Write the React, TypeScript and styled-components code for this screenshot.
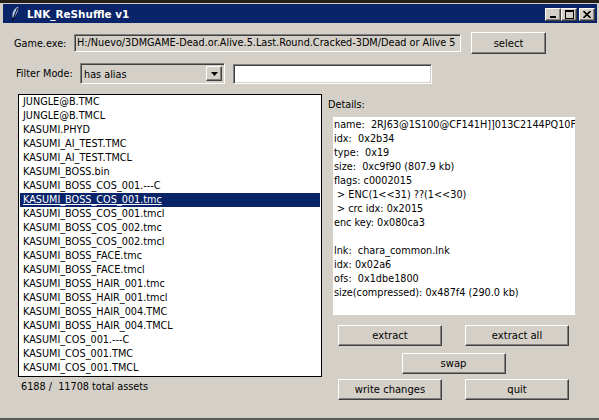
import React from "react";
import styled, { createGlobalStyle, css } from "styled-components";

const GlobalStyle = createGlobalStyle`
  html, body {
    margin: 0;
    padding: 0;
    background: #241e1a;
  }
  body {
    font-family: "DejaVu Sans", "Liberation Sans", sans-serif;
    font-size: 9.7px;
    color: #000;
  }
`;

const raised = css`
  border: 1px solid;
  border-color: #ffffff #404040 #404040 #ffffff;
  box-shadow: inset -1px -1px #808080, inset 1px 1px #d4d0c8;
`;

const sunken = css`
  border: 1px solid;
  border-color: #808080 #ffffff #ffffff #808080;
  box-shadow: inset 1px 1px #404040, inset -1px -1px #d4d0c8;
`;

const Window = styled.div`
  margin-top: 3px;
  height: 417px;
  box-sizing: border-box;
  background: #d4d0c8;
  padding: 1px 2px 0 3px;
  border-bottom: 2px solid #5a5a5a;
  display: flex;
  flex-direction: column;
`;

const TitleBar = styled.div`
  height: 19px;
  background: #0a246a;
  display: flex;
  align-items: center;
  padding-left: 9px;
  padding-right: 2px;
`;

const Title = styled.span`
  margin-left: 8px;
  color: #fff;
  font-weight: bold;
  font-size: 10.4px;
  flex: 1;
`;

const CaptionButton = styled.div<{ $gap?: boolean }>`
  ${raised};
  width: 16px;
  height: 13px;
  box-sizing: border-box;
  background: #d4d0c8;
  margin-top: 1px;
  margin-left: ${(p) => (p.$gap ? "2px" : "0")};
  display: flex;
  align-items: center;
  justify-content: center;
`;

const Client = styled.div`
  flex: 1;
  display: flex;
  flex-direction: column;
`;

const Row = styled.div<{ $top: number; $left: number; $h: number }>`
  display: flex;
  align-items: center;
  margin-top: ${(p) => p.$top}px;
  padding-left: ${(p) => p.$left}px;
  height: ${(p) => p.$h}px;
`;

const Label = styled.span<{ $w: number }>`
  width: ${(p) => p.$w}px;
  white-space: nowrap;
`;

const Field = styled.div<{ $w: number; $h: number; $white?: boolean }>`
  ${sunken};
  box-sizing: border-box;
  width: ${(p) => p.$w}px;
  height: ${(p) => p.$h}px;
  background: ${(p) => (p.$white ? "#fff" : "#d4d0c8")};
  padding: 0 2px 0 2px;
  line-height: ${(p) => p.$h - 2}px;
  white-space: nowrap;
  overflow: hidden;
  margin-left: ${(p) => (p.$white ? "8px" : "0")};
`;

const Combo = styled.div`
  ${sunken};
  box-sizing: border-box;
  width: 145px;
  height: 21px;
  background: #d4d0c8;
  display: flex;
  align-items: stretch;
  padding: 2px;
`;

const ComboText = styled.span`
  flex: 1;
  line-height: 17px;
  padding-left: 1px;
`;

const ComboArrow = styled.div`
  ${raised};
  box-sizing: border-box;
  width: 16px;
  display: flex;
  align-items: center;
  justify-content: center;
`;

const Button = styled.div<{ $w: number }>`
  ${raised};
  box-sizing: border-box;
  width: ${(p) => p.$w}px;
  height: 21px;
  background: #d4d0c8;
  display: flex;
  align-items: center;
  justify-content: center;
  font-size: 10px;
`;

const SelectButton = styled(Button)`
  height: 22px;
  margin-left: 10px;
`;

const Main = styled.div`
  display: flex;
  margin-top: 10px;
  padding-left: 15px;
`;

const LeftColumn = styled.div`
  display: flex;
  flex-direction: column;
`;

const ListBox = styled.div`
  width: 304px;
  height: 283px;
  box-sizing: border-box;
  border: 1px solid #000;
  background: #fff;
  padding: 0 1px;
  overflow: hidden;
`;

const ListItem = styled.div<{ $selected?: boolean }>`
  height: 14px;
  line-height: 14px;
  padding-left: 3px;
  white-space: nowrap;
  background: ${(p) => (p.$selected ? "#0a246a" : "transparent")};
  color: ${(p) => (p.$selected ? "#fff" : "#000")};
  text-decoration: ${(p) => (p.$selected ? "underline" : "none")};
`;

const Status = styled.div`
  height: 20px;
  line-height: 20px;
  padding-left: 3px;
  white-space: pre;
`;

const RightColumn = styled.div`
  flex: 1;
  display: flex;
  flex-direction: column;
`;

const DetailsLabel = styled.div`
  margin-top: 4px;
  padding-left: 6px;
  line-height: 14px;
`;

const DetailsBox = styled.div`
  margin: 5px 0 0 11px;
  width: 242px;
  height: 198px;
  box-sizing: border-box;
  background: #fff;
  padding: 1px 0 0 1px;
  overflow: hidden;
`;

const DetailLine = styled.div`
  height: 14px;
  line-height: 14px;
  white-space: pre;
`;

const Actions = styled.div`
  margin: 10px 0 0 16px;
  width: 231px;
  display: flex;
  flex-direction: column;
  align-items: center;
`;

const ActionRow = styled.div<{ $top: number }>`
  display: flex;
  justify-content: space-between;
  width: 100%;
  margin-top: ${(p) => p.$top}px;
`;

const SwapRow = styled.div`
  margin-top: 7px;
`;

const files = [
  "JUNGLE@B.TMC",
  "JUNGLE@B.TMCL",
  "KASUMI.PHYD",
  "KASUMI_AI_TEST.TMC",
  "KASUMI_AI_TEST.TMCL",
  "KASUMI_BOSS.bin",
  "KASUMI_BOSS_COS_001.---C",
  "KASUMI_BOSS_COS_001.tmc",
  "KASUMI_BOSS_COS_001.tmcl",
  "KASUMI_BOSS_COS_002.tmc",
  "KASUMI_BOSS_COS_002.tmcl",
  "KASUMI_BOSS_FACE.tmc",
  "KASUMI_BOSS_FACE.tmcl",
  "KASUMI_BOSS_HAIR_001.tmc",
  "KASUMI_BOSS_HAIR_001.tmcl",
  "KASUMI_BOSS_HAIR_004.TMC",
  "KASUMI_BOSS_HAIR_004.TMCL",
  "KASUMI_COS_001.---C",
  "KASUMI_COS_001.TMC",
  "KASUMI_COS_001.TMCL",
];

const details = [
  "name:  2RJ63@1S100@CF141H]]013C2144PQ10F",
  "idx:  0x2b34",
  "type:  0x19",
  "size:  0xc9f90 (807.9 kb)",
  "flags: c0002015",
  " > ENC(1<<31) ??(1<<30)",
  " > crc idx: 0x2015",
  "enc key: 0x080ca3",
  "",
  "lnk:  chara_common.lnk",
  "idx: 0x02a6",
  "ofs:  0x1dbe1800",
  "size(compressed): 0x487f4 (290.0 kb)",
];

function Feather() {
  return (
    <svg width="7" height="14" viewBox="0 0 7 14">
      <path d="M6 0 C2 2 0 6 1 11 C3 9 6 5 6 0 Z" fill="#a6caf0" stroke="#d8e8ff" strokeWidth="0.5" />
      <path d="M5.5 1 L0.5 13.5" stroke="#000" strokeWidth="1" />
    </svg>
  );
}

export default function App() {
  return (
    <>
      <GlobalStyle />
      <Window>
        <TitleBar>
          <Feather />
          <Title>LNK_ReShuffle v1</Title>
          <CaptionButton>
            <svg width="8" height="7" viewBox="0 0 8 7">
              <rect x="1" y="5" width="6" height="2" fill="#000" />
            </svg>
          </CaptionButton>
          <CaptionButton>
            <svg width="9" height="9" viewBox="0 0 9 9">
              <rect x="0.5" y="0.5" width="8" height="8" fill="none" stroke="#000" />
              <rect x="0" y="0" width="9" height="2" fill="#000" />
            </svg>
          </CaptionButton>
          <CaptionButton $gap>
            <svg width="8" height="7" viewBox="0 0 8 7">
              <path d="M0.5 0 L7.5 7 M7.5 0 L0.5 7" stroke="#000" strokeWidth="1.6" />
            </svg>
          </CaptionButton>
        </TitleBar>
        <Client>
          <Row $top={9} $left={11} $h={22}>
            <Label $w={60}>Game.exe:</Label>
            <Field $w={387} $h={18}>
              H:/Nuevo/3DMGAME-Dead.or.Alive.5.Last.Round.Cracked-3DM/Dead or Alive 5
            </Field>
            <SelectButton $w={75}>select</SelectButton>
          </Row>
          <Row $top={9} $left={13} $h={21}>
            <Label $w={64}>Filter Mode:</Label>
            <Combo>
              <ComboText>has alias</ComboText>
              <ComboArrow>
                <svg width="7" height="4" viewBox="0 0 7 4">
                  <path d="M0 0 H7 L3.5 4 Z" fill="#000" />
                </svg>
              </ComboArrow>
            </Combo>
            <Field $w={199} $h={20} $white />
          </Row>
          <Main>
            <LeftColumn>
              <ListBox>
                {files.map((f) => (
                  <ListItem key={f} $selected={f === "KASUMI_BOSS_COS_001.tmc"}>
                    {f}
                  </ListItem>
                ))}
              </ListBox>
              <Status>6188 /  11708 total assets</Status>
            </LeftColumn>
            <RightColumn>
              <DetailsLabel>Details:</DetailsLabel>
              <DetailsBox>
                {details.map((d, i) => (
                  <DetailLine key={i}>{d}</DetailLine>
                ))}
              </DetailsBox>
              <Actions>
                <ActionRow $top={0}>
                  <Button $w={104}>extract</Button>
                  <Button $w={104}>extract all</Button>
                </ActionRow>
                <SwapRow>
                  <Button $w={104}>swap</Button>
                </SwapRow>
                <ActionRow $top={5}>
                  <Button $w={104}>write changes</Button>
                  <Button $w={104}>quit</Button>
                </ActionRow>
              </Actions>
            </RightColumn>
          </Main>
        </Client>
      </Window>
    </>
  );
}
